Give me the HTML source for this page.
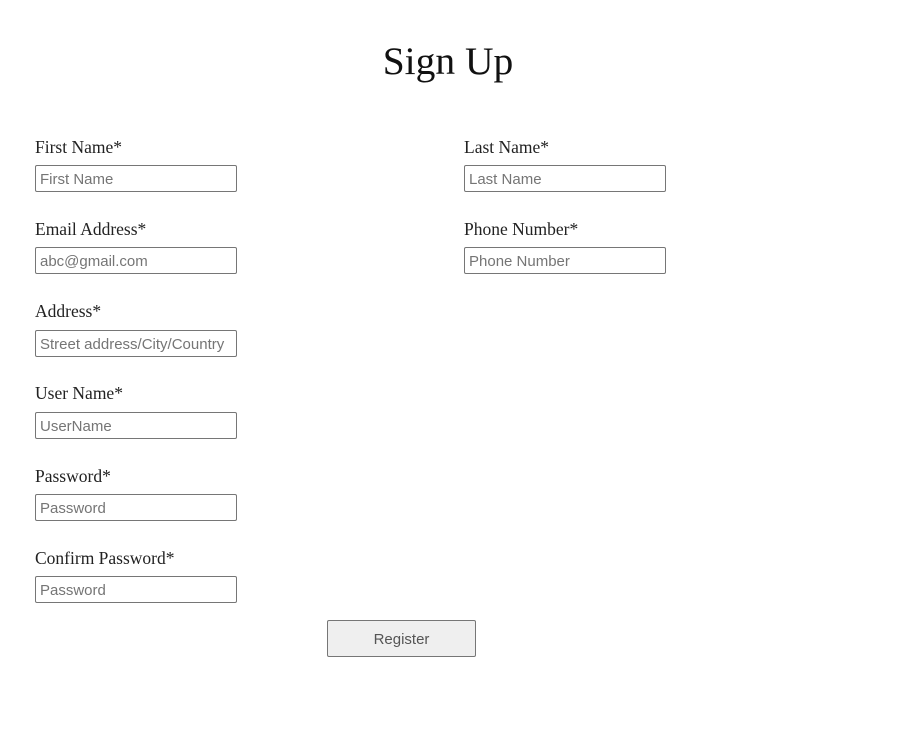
<!DOCTYPE html>
<html><head><meta charset="utf-8"><style>
body{margin:0;width:901px;height:737px;background:#fff;font-family:"Liberation Serif",serif;position:relative;overflow:hidden}
h1{position:absolute;top:38px;left:0;width:896px;text-align:center;margin:0;font-weight:normal;font-size:39.5px;color:#111;line-height:46px}
.l{position:absolute;font-size:17.5px;color:#222;line-height:20px}
.i{position:absolute;border:1px solid #767676;border-radius:2px;font-family:"Liberation Sans",sans-serif;font-size:15px;color:#757575;line-height:27px;padding-left:4px;box-sizing:border-box;width:202px;height:27px}
.b{position:absolute;left:327px;top:620px;width:149px;height:37px;box-sizing:border-box;border:1px solid #767676;border-radius:2px;background:#efefef;font-family:"Liberation Sans",sans-serif;font-size:15px;color:#555;text-align:center;line-height:37px}
</style></head><body>
<h1>Sign Up</h1>
<div class="l" style="left:35px;top:137px">First Name*</div>
<div class="i" style="left:35px;top:165px">First Name</div>
<div class="l" style="left:464px;top:137px">Last Name*</div>
<div class="i" style="left:464px;top:165px">Last Name</div>
<div class="l" style="left:35px;top:219px">Email Address*</div>
<div class="i" style="left:35px;top:247px">abc@gmail.com</div>
<div class="l" style="left:464px;top:219px">Phone Number*</div>
<div class="i" style="left:464px;top:247px">Phone Number</div>
<div class="l" style="left:35px;top:301px">Address*</div>
<div class="i" style="left:35px;top:330px;white-space:nowrap;overflow:hidden">Street address/City/Country</div>
<div class="l" style="left:35px;top:383px">User Name*</div>
<div class="i" style="left:35px;top:412px">UserName</div>
<div class="l" style="left:35px;top:466px">Password*</div>
<div class="i" style="left:35px;top:494px">Password</div>
<div class="l" style="left:35px;top:548px">Confirm Password*</div>
<div class="i" style="left:35px;top:576px">Password</div>
<div class="b">Register</div>
</body></html>
